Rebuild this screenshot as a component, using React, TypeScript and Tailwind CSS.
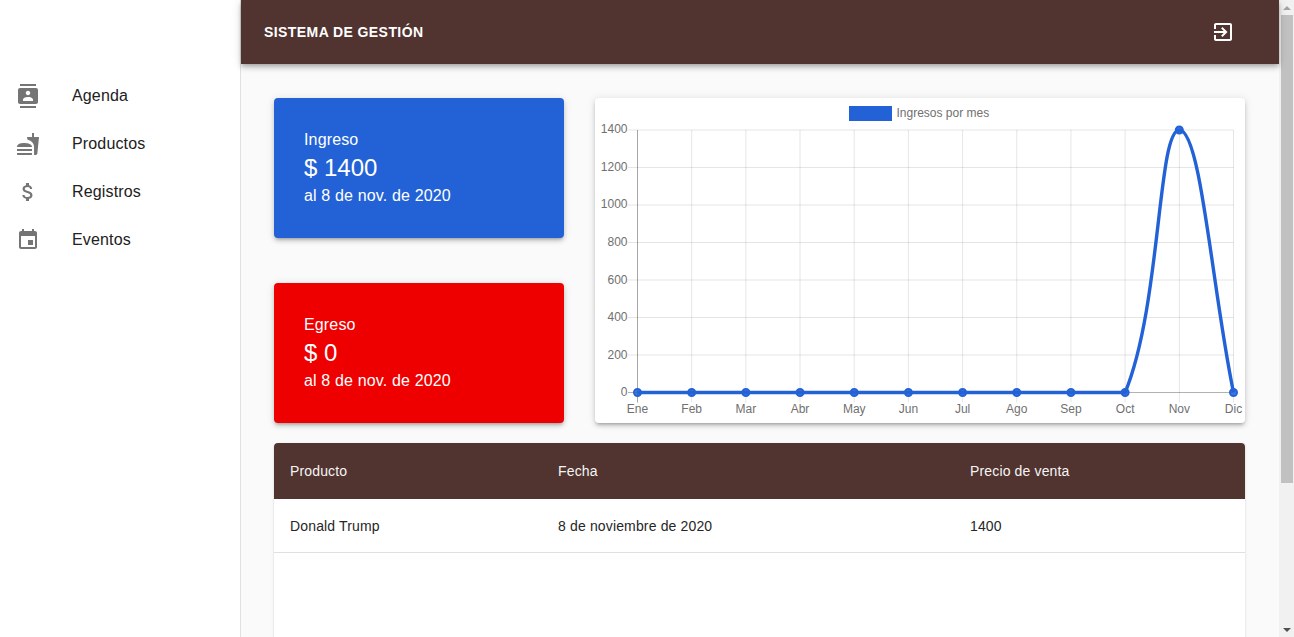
import React from 'react';

const months = ['Ene', 'Feb', 'Mar', 'Abr', 'May', 'Jun', 'Jul', 'Ago', 'Sep', 'Oct', 'Nov', 'Dic'];
const yLabels = ['1400', '1200', '1000', '800', '600', '400', '200', '0'];
const yBaselines = [35, 73, 110, 148, 186, 223, 261, 298];

// chart coordinates are local to the card
const left = 42.5;
const right = 638.5;
const top = 32;
const bottom = 294.5;
const stepX = (right - left) / 11;
const stepY = (bottom - top) / 7;
const xAt = (i: number) => left + stepX * i;

const Icon = ({ d, className }: { d: string; className?: string }) => (
  <svg viewBox="0 0 24 24" width="24" height="24" fill="currentColor" className={className}>
    <path d={d} />
  </svg>
);

const navItems = [
  {
    label: 'Agenda',
    d: 'M20 0H4v2h16V0zM4 24h16v-2H4v2zM20 4H4c-1.1 0-2 .9-2 2v12c0 1.1.9 2 2 2h16c1.1 0 2-.9 2-2V6c0-1.1-.9-2-2-2zm-8 2.75c1.24 0 2.25 1.01 2.25 2.25s-1.01 2.25-2.25 2.25S9.75 10.24 9.75 9 10.76 6.75 12 6.75zM17 17H7v-1.5c0-1.67 3.33-2.5 5-2.5s5 .83 5 2.5V17z',
  },
  {
    label: 'Productos',
    d: 'M18.06 22.99h1.66c.84 0 1.53-.64 1.63-1.46L23 5.05h-5V1h-1.97v4.05h-4.97l.3 2.34c1.71.47 3.31 1.32 4.27 2.26 1.44 1.42 2.43 2.89 2.43 5.29v8.05zM1 21.99V21h15.03v.99c0 .55-.45 1-1.01 1H2.01c-.56 0-1.01-.45-1.01-1zm15.03-7c0-3.5-5.37-4-8.02-4-2.66 0-7.01.5-7.01 4h15.03zM1.02 17h15v2h-15z',
  },
  {
    label: 'Registros',
    d: 'M11.8 10.9c-2.27-.59-3-1.2-3-2.15 0-1.09 1.01-1.85 2.7-1.85 1.78 0 2.44.85 2.5 2.1h2.21c-.07-1.72-1.12-3.3-3.21-3.81V3h-3v2.16c-1.94.42-3.5 1.68-3.5 3.61 0 2.31 1.91 3.46 4.7 4.13 2.5.6 3 1.48 3 2.41 0 .69-.49 1.79-2.7 1.79-2.06 0-2.87-.92-2.98-2.1h-2.2c.12 2.19 1.76 3.42 3.68 3.83V21h3v-2.15c1.95-.37 3.5-1.5 3.5-3.55 0-2.84-2.43-3.81-4.7-4.4z',
  },
  {
    label: 'Eventos',
    d: 'M17 12h-5v5h5v-5zM16 1v2H8V1H6v2H5c-1.11 0-1.99.9-1.99 2L3 19c0 1.1.89 2 2 2h14c1.1 0 2-.9 2-2V5c0-1.1-.9-2-2-2h-1V1h-2zm3 18H5V8h14v11z',
  },
];

const cardShadow = 'shadow-[0_3px_3px_-2px_rgba(0,0,0,0.2),0_3px_4px_0_rgba(0,0,0,0.14),0_1px_8px_0_rgba(0,0,0,0.12)]';

const Sidebar = () => (
  <aside className="w-[241px] shrink-0 h-full bg-white border-r border-[#e0e0e0] pt-[72px]">
    {navItems.map((item) => (
      <div key={item.label} className="flex items-center h-12 pl-4">
        <div className="w-14 shrink-0 text-[#757575]">
          <Icon d={item.d} />
        </div>
        <span className="text-base tracking-[0.15px] text-[#212121]">{item.label}</span>
      </div>
    ))}
  </aside>
);

const StatCard = ({ title, amount, bg }: { title: string; amount: string; bg: string }) => (
  <div className={`h-[140px] rounded text-white pl-[30px] flex flex-col justify-center ${cardShadow} ${bg}`}>
    <div className="text-base leading-6 tracking-[0.15px]">{title}</div>
    <div className="text-2xl leading-8">{amount}</div>
    <div className="text-base leading-6 tracking-[0.15px]">al 8 de nov. de 2020</div>
  </div>
);

const Chart = () => {
  const line = `M${xAt(0)} ${bottom} L${xAt(9)} ${bottom} C${xAt(9) + 36} 207 ${xAt(10) - 21.7} ${top} ${xAt(10)} ${top} C${xAt(10) + 21.7} ${top} ${xAt(11) - 21.7} 189.5 ${xAt(11)} ${bottom}`;
  return (
    <div className={`flex-1 bg-white rounded ${cardShadow}`}>
      <svg width="650" height="325" viewBox="0 0 650 325" className="block" fontFamily="'Liberation Sans', Arial, sans-serif" fontSize="12" fill="#707070">
        <rect x="254" y="8" width="43" height="15" fill="#2362d6" />
        <text x="301.5" y="19">Ingresos por mes</text>
        {yLabels.map((label, i) => {
          const y = top + stepY * i;
          return (
            <g key={label}>
              <line x1={33} x2={right} y1={y} y2={y} stroke={i === 7 ? 'rgba(0,0,0,0.3)' : 'rgba(0,0,0,0.1)'} />
              <text x={32.5} y={yBaselines[i]} textAnchor="end">{label}</text>
            </g>
          );
        })}
        {months.map((m, i) => (
          <g key={m}>
            <line x1={xAt(i)} x2={xAt(i)} y1={top} y2={bottom + 10} stroke={i === 0 ? 'rgba(0,0,0,0.35)' : 'rgba(0,0,0,0.1)'} />
            <text x={xAt(i)} y={315} textAnchor="middle">{m}</text>
          </g>
        ))}
        <path d={line} fill="none" stroke="#2362d6" strokeWidth="3.4" />
        {months.map((m, i) => (
          <circle key={m} cx={xAt(i)} cy={i === 10 ? top : bottom} r="3.5" fill="rgba(35,98,214,0.85)" stroke="#2362d6" strokeWidth="2" />
        ))}
      </svg>
    </div>
  );
};

const Scrollbar = () => (
  <div className="w-[15px] shrink-0 h-full bg-[#f1f1f1] flex flex-col">
    <div className="h-[15px] flex items-center justify-center">
      <div className="w-0 h-0 border-x-[4px] border-x-transparent border-b-[4px] border-b-[#a3a3a3]" />
    </div>
    <div className="w-3 ml-[2px] h-[468px] bg-[#c1c1c1]" />
    <div className="flex-1" />
    <div className="h-[15px] flex items-center justify-center">
      <div className="w-0 h-0 border-x-[4px] border-x-transparent border-t-[4px] border-t-[#505050]" />
    </div>
  </div>
);

export default function App() {
  return (
    <div className="flex h-[637px] overflow-hidden bg-[#fafafa] font-['Liberation_Sans',Arial,sans-serif]">
      <Sidebar />
      <div className="flex-1 min-w-0 flex flex-col h-full">
        <header className="h-16 shrink-0 bg-[#51332f] text-white flex items-center justify-between pl-[23px] pr-[44px] shadow-[0_2px_4px_-1px_rgba(0,0,0,0.2),0_4px_5px_0_rgba(0,0,0,0.14),0_1px_10px_0_rgba(0,0,0,0.12)] z-10">
          <h1 className="text-sm font-bold tracking-[0.42px]">SISTEMA DE GESTIÓN</h1>
          <Icon d="M10.09 15.59L11.5 17l5-5-5-5-1.41 1.41L12.67 11H3v2h9.67l-2.58 2.59zM19 3H5c-1.11 0-2 .9-2 2v4h2V5h14v14H5v-4H3v4c0 1.1.89 2 2 2h14c1.1 0 2-.9 2-2V5c0-1.1-.9-2-2-2z" />
        </header>
        <main className="flex-1 overflow-hidden pt-[34px] pl-[33px] pr-[34px]">
          <div className="flex gap-[31px] h-[325px]">
            <div className="w-[290px] shrink-0 flex flex-col justify-between">
              <StatCard title="Ingreso" amount="$ 1400" bg="bg-[#2362d6]" />
              <StatCard title="Egreso" amount="$ 0" bg="bg-[#ee0000]" />
            </div>
            <Chart />
          </div>
          <div className="mt-5 h-[400px] bg-white rounded shadow-[0_2px_1px_-1px_rgba(0,0,0,0.2),0_1px_1px_0_rgba(0,0,0,0.14),0_1px_3px_0_rgba(0,0,0,0.12)] overflow-hidden text-sm tracking-[0.15px]">
            <div className="grid grid-cols-[268px_412px_1fr] h-14 items-center bg-[#51332f] text-[#f5f5f5] px-4">
              <div>Producto</div>
              <div>Fecha</div>
              <div>Precio de venta</div>
            </div>
            <div className="grid grid-cols-[268px_412px_1fr] h-[54px] items-center border-b border-[#e0e0e0] text-[#262626] px-4">
              <div>Donald Trump</div>
              <div>8 de noviembre de 2020</div>
              <div>1400</div>
            </div>
          </div>
        </main>
      </div>
      <Scrollbar />
    </div>
  );
}
